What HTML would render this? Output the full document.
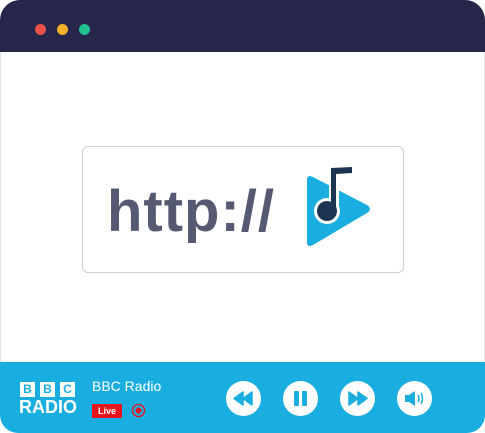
<!DOCTYPE html>
<html><head><style>
html,body{margin:0;padding:0;background:#fff;}
body{width:485px;height:433px;position:relative;overflow:hidden;font-family:"Liberation Sans",sans-serif;}
.top{position:absolute;left:0;top:0;width:485px;height:52px;background:#26264a;border-radius:20px 20px 0 0;}
.dot{position:absolute;top:24px;width:11px;height:11px;border-radius:50%;}
.win{position:absolute;left:0;top:52px;width:483px;height:310px;border:1px solid #e4e4e8;border-top:none;}
.box{position:absolute;left:82px;top:146px;width:320px;height:125px;border:1px solid #cfcfd4;border-radius:6px;}
.http{position:absolute;left:107px;top:178px;font-size:58px;font-weight:bold;color:#555a72;line-height:68px;letter-spacing:1px;}
.bar{position:absolute;left:0;top:362px;width:485px;height:71px;background:#1aaee0;border-radius:0 0 18px 18px;}
.b{position:absolute;top:382px;width:15px;height:15px;background:#fff;color:#1aaee0;font-weight:bold;font-size:12px;text-align:center;line-height:15px;}
.radio{position:absolute;left:19px;top:397px;color:#fff;font-weight:bold;font-size:18px;}
.t{position:absolute;left:92px;top:378px;color:#fff;font-size:14px;}
.live{position:absolute;left:92px;top:404px;width:30px;height:14px;background:#e8141b;color:#fff;font-size:9px;font-weight:bold;text-align:center;line-height:14px;}
.c{position:absolute;top:381px;width:35px;height:35px;border-radius:50%;background:#fff;}
.c svg{position:absolute;left:0;top:0;}
</style></head><body>
<div class="top">
<div class="dot" style="left:35px;background:#e8524a"></div>
<div class="dot" style="left:57px;background:#f6b129"></div>
<div class="dot" style="left:79px;background:#1fc18f"></div>
</div>
<div class="win"></div>
<div class="box"></div>
<div class="http">http://</div>
<svg style="position:absolute;left:290px;top:155px" width="100" height="110" viewBox="290 155 100 110">
<path d="M307 180 Q307 174 313 177 L367 205 Q373 209 367 213 L313 245 Q307 248 307 242 Z" fill="#1aaee0"/>
<circle cx="327" cy="211" r="13" fill="#fff"/>
<path d="M329 166 L354 165 L354 176 L339 176 L339 212 L329 212 Z" fill="#fff"/>
<circle cx="327" cy="211" r="10" fill="#1e3552"/>
<path d="M331 168 L352 167 L352 173 L336 174 L336 212 L331 212 Z" fill="#1e3552"/>
</svg>
<div class="bar"></div>
<div class="b" style="left:20px">B</div>
<div class="b" style="left:40px">B</div>
<div class="b" style="left:60px">C</div>
<div class="radio">RADIO</div>
<div class="t">BBC Radio</div>
<div class="live">Live</div>
<svg style="position:absolute;left:131px;top:403px" width="15" height="15"><circle cx="7.5" cy="7.5" r="6" fill="none" stroke="#e8141b" stroke-width="1.3"/><circle cx="7.5" cy="7.5" r="3" fill="#e8141b"/></svg>
<div class="c" style="left:226px"><svg width="35" height="35"><path d="M8 17.5 L17 11 V24 Z M17 17.5 L26 11 V24 Z" fill="#1aaee0" stroke="#1aaee0" stroke-linejoin="round" stroke-width="1.5"/></svg></div>
<div class="c" style="left:283px"><svg width="35" height="35"><rect x="11" y="10" width="5" height="15" rx="1" fill="#1aaee0"/><rect x="19" y="10" width="5" height="15" rx="1" fill="#1aaee0"/></svg></div>
<div class="c" style="left:340px"><svg width="35" height="35"><path d="M27 17.5 L18 11 V24 Z M18 17.5 L9 11 V24 Z" fill="#1aaee0" stroke="#1aaee0" stroke-linejoin="round" stroke-width="1.5"/></svg></div>
<div class="c" style="left:397px"><svg width="35" height="35"><path d="M8 14 H12 L18 10 V25 L12 21 H8 Z" fill="#1aaee0"/><path d="M21 14 Q23 17.5 21 21 M24 12 Q27 17.5 24 23" fill="none" stroke="#1aaee0" stroke-width="1.5"/></svg></div>
</body></html>
